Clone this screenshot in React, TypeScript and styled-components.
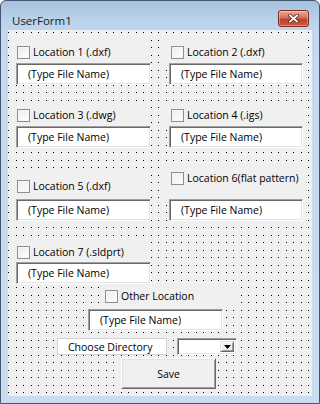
import React from "react";
import styled, { createGlobalStyle } from "styled-components";

const FONT = `"Open Sans", "Liberation Sans", Arial, sans-serif`;
const CONTROL_SIZE = "10.5px";

const Global = createGlobalStyle`
  html, body { margin: 0; padding: 0; background: #ffffff; }
  body { width: 320px; height: 404px; overflow: hidden; }
  * { box-sizing: border-box; }
`;

const Window = styled.div`
  width: 320px;
  height: 404px;
  border: 1px solid #44566e;
  border-radius: 6px 6px 0 0;
  background: linear-gradient(to bottom, #a6c1de 0px, #b9d1ea 18px, #c4d9ef 34px, #c9ddf1 100%);
  display: flex;
  flex-direction: column;
  padding: 0 7px 7px 7px;
  font-family: ${FONT};
`;

const TitleBar = styled.div`
  height: 29px;
  display: flex;
  justify-content: space-between;
  align-items: flex-start;
`;

const Title = styled.div`
  padding: 12px 0 0 4px;
  font-size: 11.5px;
  line-height: 15px;
  color: #1b1b1b;
`;

const CloseButton = styled.div`
  margin: 9px 3px 0 0;
  width: 31px;
  height: 17px;
  border: 1px solid #7b2a1e;
  border-radius: 3px;
  background: linear-gradient(to bottom, #e9a99a 0%, #d4725f 45%, #c2402a 55%, #c95a3f 100%);
  box-shadow: inset 0 0 0 1px rgba(255, 255, 255, 0.35);
  display: flex;
  align-items: center;
  justify-content: center;
`;

const Client = styled.div`
  width: 304px;
  height: 366px;
  background-color: #f0f0f0;
  background-image:
    conic-gradient(from 270deg at 1px 1px, #000 90deg, transparent 0),
    conic-gradient(from 270deg at 1px 1px, #000 90deg, transparent 0),
    conic-gradient(from 270deg at 1px 1px, #000 90deg, transparent 0),
    conic-gradient(from 270deg at 1px 1px, #000 90deg, transparent 0);
  background-size: 15px 15px;
  background-position: 0 2px, 8px 2px, 0 10px, 8px 10px;
  padding-left: 4px;
  display: flex;
  flex-direction: column;
  align-items: flex-start;
`;

const Row = styled.div<{ $top: number }>`
  display: grid;
  grid-template-columns: 139px 139px;
  column-gap: 13px;
  align-items: end;
  margin-top: ${(p) => p.$top}px;
`;

const Group = styled.div`
  display: flex;
  flex-direction: column;
`;

const CheckLine = styled.label<{ $pad: number; $h: number; $left?: number; $w?: number }>`
  display: flex;
  align-items: flex-start;
  gap: 3px;
  width: ${(p) => (p.$w ? `${p.$w}px` : "100%")};
  height: ${(p) => p.$h}px;
  padding: 6px 0 0 ${(p) => p.$pad}px;
  margin-left: ${(p) => p.$left ?? 0}px;
  background: #f0f0f0;
  font-size: ${CONTROL_SIZE};
  line-height: 13px;
  color: #000;
  white-space: nowrap;
`;

const Box = styled.span`
  width: 13px;
  height: 13px;
  flex: none;
  border: 1px solid #8f8f8f;
  background: linear-gradient(135deg, #ececec, #ffffff);
  box-shadow: inset 0 0 0 1px #f6f6f6;
`;

const TextBox = styled.div<{ $w: number; $left?: number }>`
  width: ${(p) => p.$w}px;
  height: 22px;
  margin-left: ${(p) => p.$left ?? 0}px;
  background: #ffffff;
  border-style: solid;
  border-width: 1px;
  border-color: #a0a0a0 #ffffff #ffffff #a0a0a0;
  box-shadow: inset 1px 1px 0 #696969, inset -1px -1px 0 #e3e3e3;
  padding-left: 11px;
  display: flex;
  align-items: center;
  font-size: ${CONTROL_SIZE};
  color: #000;
  white-space: nowrap;
`;

const BottomRow = styled.div`
  display: flex;
  margin: 7px 0 0 45px;
  gap: 10px;
`;

const DirLabel = styled.div`
  width: 110px;
  height: 17px;
  background: #ffffff;
  border: 1px solid #d2d2d2;
  padding-left: 10px;
  display: flex;
  align-items: center;
  font-size: ${CONTROL_SIZE};
  color: #000;
  white-space: nowrap;
`;

const Combo = styled.div`
  width: 60px;
  height: 17px;
  background: #ffffff;
  border-style: solid;
  border-width: 1px;
  border-color: #a0a0a0 #ffffff #ffffff #a0a0a0;
  box-shadow: inset 1px 1px 0 #696969, inset -1px -1px 0 #e3e3e3;
  display: flex;
  justify-content: flex-end;
  padding: 2px 2px 2px 0;
`;

const DropButton = styled.div`
  width: 14px;
  height: 100%;
  background: #f0f0f0;
  border-style: solid;
  border-width: 1px;
  border-color: #e3e3e3 #696969 #696969 #e3e3e3;
  box-shadow: inset 1px 1px 0 #ffffff, inset -1px -1px 0 #a0a0a0;
  display: flex;
  align-items: center;
  justify-content: center;
`;

const SaveButton = styled.div`
  margin: 3px 0 0 109px;
  width: 95px;
  height: 31px;
  background: #f0f0f0;
  border-style: solid;
  border-width: 1px;
  border-color: #ffffff #696969 #696969 #ffffff;
  box-shadow: inset 1px 1px 0 #e3e3e3, inset -1px -1px 0 #a0a0a0;
  display: flex;
  align-items: center;
  justify-content: center;
  font-size: ${CONTROL_SIZE};
  color: #000;
`;

type CheckProps = { label: string; pad: number; h: number; left?: number; w?: number };

const Check = ({ label, pad, h, left, w }: CheckProps) => (
  <CheckLine $pad={pad} $h={h} $left={left} $w={w}>
    <Box />
    <span>{label}</span>
  </CheckLine>
);

const FILE = "(Type File Name)";

export default function App() {
  return (
    <>
      <Global />
      <Window>
        <TitleBar>
          <Title>UserForm1</Title>
          <CloseButton>
            <svg width="11" height="9" viewBox="0 0 11 9">
              <path d="M2 1.5 L9 7.5 M9 1.5 L2 7.5" stroke="#5a2018" strokeWidth="3.2" strokeLinecap="square" />
              <path d="M2 1.5 L9 7.5 M9 1.5 L2 7.5" stroke="#ffffff" strokeWidth="1.8" strokeLinecap="square" />
            </svg>
          </CloseButton>
        </TitleBar>
        <Client>
          <Row $top={10}>
            <Group>
              <Check label="Location 1 (.dxf)" pad={5} h={23} />
              <TextBox $w={135} $left={4}>{FILE}</TextBox>
            </Group>
            <Group>
              <Check label="Location 2 (.dxf)" pad={7} h={23} />
              <TextBox $w={134} $left={5}>{FILE}</TextBox>
            </Group>
          </Row>
          <Row $top={18}>
            <Group>
              <Check label="Location 3 (.dwg)" pad={5} h={23} />
              <TextBox $w={135} $left={4}>{FILE}</TextBox>
            </Group>
            <Group>
              <Check label="Location 4 (.igs)" pad={7} h={23} />
              <TextBox $w={134} $left={5}>{FILE}</TextBox>
            </Group>
          </Row>
          <Row $top={18}>
            <Group>
              <Check label="Location 5 (.dxf)" pad={5} h={25} />
              <TextBox $w={135} $left={4}>{FILE}</TextBox>
            </Group>
            <Group>
              <Check label="Location 6(flat pattern)" pad={7} h={33} />
              <TextBox $w={134} $left={5}>{FILE}</TextBox>
            </Group>
          </Row>
          <Row $top={19}>
            <Group>
              <Check label="Location 7 (.sldprt)" pad={5} h={22} />
              <TextBox $w={135} $left={4}>{FILE}</TextBox>
            </Group>
          </Row>
          <Check label="Other Location" pad={4} h={25} left={89} w={140} />
          <TextBox $w={135} $left={76}>
            {FILE}
          </TextBox>
          <BottomRow>
            <DirLabel>Choose Directory</DirLabel>
            <Combo>
              <DropButton>
                <svg width="7" height="4" viewBox="0 0 7 4">
                  <path d="M0 0 H7 L3.5 4 Z" fill="#000" />
                </svg>
              </DropButton>
            </Combo>
          </BottomRow>
          <SaveButton>Save</SaveButton>
        </Client>
      </Window>
    </>
  );
}
